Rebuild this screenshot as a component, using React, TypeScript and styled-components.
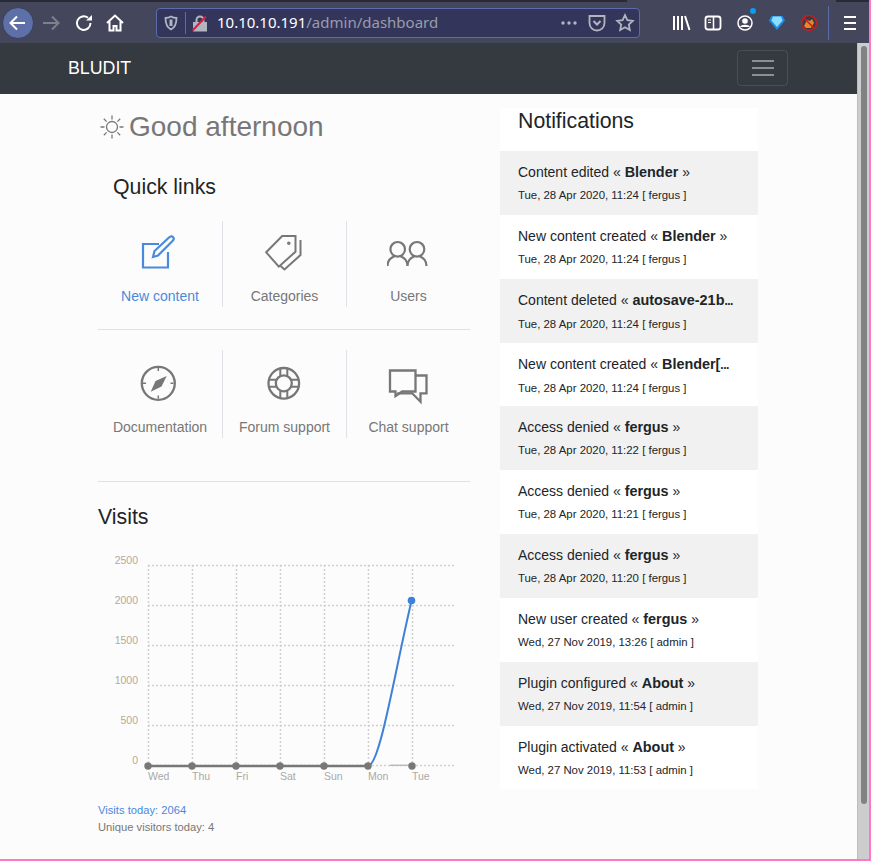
import { ReactNode } from "react"
import styled, { createGlobalStyle } from "styled-components";

const GlobalStyle = createGlobalStyle`
  html, body {
    margin: 0;
    padding: 0;
    background: #fcfcfc;
  }
  * {
    box-sizing: border-box;
  }
`;

const Frame = styled.div`
  width: 871px;
  height: 861px;
  overflow: hidden;
  display: flex;
  flex-direction: column;
  border-right: 2px solid #ff78c8;
  border-bottom: 2px solid #ff78c8;
  font-family: "Liberation Sans", Arial, sans-serif;
`;

const TabStrip = styled.div`
  height: 2px;
  flex: none;
  display: flex;
  background: #2a2a36;
`;

const TabGap = styled.div`
  width: 209px;
  margin-left: 627px;
  background: #44475c;
`;

const Toolbar = styled.div`
  height: 41px;
  flex: none;
  display: flex;
  align-items: center;
  padding-left: 2px;
  background: #44475c;
`;

const ToolButton = styled.div<{ $ml?: number }>`
  width: 32px;
  height: 32px;
  flex: none;
  position: relative;
  display: flex;
  align-items: center;
  justify-content: center;
  margin-left: ${p => p.$ml ?? 0}px;
`;

const BackButton = styled(ToolButton)`
  border-radius: 50%;
  background: #5d70a8;
  border: 1px solid #3a3f5c;
`;

const UrlBar = styled.div`
  width: 484px;
  height: 30px;
  margin-left: 25px;
  flex: none;
  display: flex;
  align-items: center;
  padding-left: 3px;
  border: 1px solid #5c6cab;
  border-radius: 4px;
  background: #33365a;
`;

const UrlDivider = styled.div`
  width: 1px;
  height: 22px;
  margin: 0 3px;
  background: #5c6cab;
`;

const UrlText = styled.div`
  font-family: "Noto Sans", sans-serif;
  font-size: 15px;
  line-height: 20px;
  padding-bottom: 2px;
  color: #9a9cab;
  margin-left: 6px;
  flex: 1;
  white-space: nowrap;
`;

const UrlHost = styled.span`
  color: #ffffff;
`;

const UrlActions = styled.div`
  display: flex;
  align-items: center;
  gap: 6px;
  padding-right: 3px;
`;

const UrlIcon = styled.div`
  width: 22px;
  height: 22px;
  display: flex;
  align-items: center;
  justify-content: center;
`;

const ToolbarDivider = styled.div`
  width: 1px;
  height: 34px;
  margin: 0 5px 0 3px;
  background: #5c6cab;
`;

const Badge = styled.span`
  position: absolute;
  top: 1px;
  right: 5px;
  width: 6px;
  height: 6px;
  border-radius: 50%;
  background: #0a9cf0;
`;

const Viewport = styled.div`
  flex: 1;
  min-height: 0;
  display: flex;
`;

const Page = styled.div`
  flex: 1;
  min-width: 0;
  background: #fcfcfc;
`;

const Scrollbar = styled.div`
  width: 12px;
  flex: none;
  padding: 3px 3px 0 3px;
  background: #cdcdcd;
  border-left: 1px solid #bdbdbd;
`;

const ScrollThumb = styled.div`
  height: 758px;
  width: 6px;
  border-radius: 3px;
  background: #7f8384;
`;

const Navbar = styled.div`
  height: 51px;
  display: flex;
  align-items: center;
  justify-content: space-between;
  padding: 0 69px 1px 68px;
  background: #343a40;
`;

const Brand = styled.div`
  font-size: 17.8px;
  color: #ffffff;
`;

const Toggler = styled.div`
  width: 51px;
  height: 36px;
  display: flex;
  flex-direction: column;
  align-items: center;
  justify-content: center;
  gap: 5px;
  border: 1px solid rgba(255, 255, 255, 0.1);
  border-radius: 4px;
`;

const TogglerBar = styled.div`
  width: 22px;
  height: 2px;
  background: #8b8f92;
`;

const Columns = styled.div`
  display: flex;
  align-items: flex-start;
  gap: 30px;
  padding: 14px 0 0 98px;
`;

const LeftColumn = styled.div`
  width: 372px;
  flex: none;
`;

const RightColumn = styled.div`
  width: 258px;
  flex: none;
  background: #ffffff;
`;

const Greeting = styled.div`
  height: 36px;
  display: flex;
  align-items: center;
  gap: 4px;
  padding: 2px 0 0 1px;
  font-size: 28px;
  color: #777777;
`;

const SectionTitle = styled.div<{ $pl?: number }>`
  font-size: 21.3px;
  line-height: 25px;
  padding-top: 1px;
  color: #212529;
  padding-left: ${p => p.$pl ?? 0}px;
`;

const QuickLinks = styled.div`
  margin-top: 30px;
`;

const LinkRow = styled.div<{ $height: number; $mt: number }>`
  display: grid;
  grid-template-columns: repeat(3, 1fr);
  height: ${p => p.$height}px;
  margin-top: ${p => p.$mt}px;
`;

const LinkCell = styled.div<{ $active?: boolean; $pt: number }>`
  display: flex;
  flex-direction: column;
  align-items: center;
  padding-top: ${p => p.$pt}px;
  font-size: 14px;
  white-space: nowrap;
  color: ${p => p.$active ? '#4a89dc' : '#777777'};
  & + & {
    border-left: 1px solid #dee2e6;
  }
`;

const LinkLabel = styled.div<{ $mt: number }>`
  margin-top: ${p => p.$mt}px;
  line-height: 18px;
`;

const Rule = styled.hr<{ $mt: number }>`
  margin: ${p => p.$mt}px 0 0;
  border: 0;
  border-top: 1px solid #dee2e6;
`;

const VisitsBlock = styled.div`
  margin-top: 22px;
`;

const Chart = styled.svg`
  display: block;
  margin-top: 20px;
  font-family: "Liberation Sans", Arial, sans-serif;
  font-size: 10.5px;
`;

const VisitLine = styled.div<{ $blue?: boolean }>`
  font-size: 11.2px;
  line-height: 17px;
  color: ${p => p.$blue ? '#4a89dc' : '#777777'};
`;

const NoticeHead = styled.div`
  height: 43px;
  padding-left: 18px;
`;

const NoticeRow = styled.div<{ $shaded: boolean }>`
  height: 63.85px;
  padding: 12px 0 0 18px;
  background: ${p => p.$shaded ? '#f1f1f1' : '#ffffff'};
  color: #212529;
`;

const NoticeTitle = styled.div`
  font-size: 14px;
  line-height: 19px;
  white-space: nowrap;
`;

const NoticeItem = styled.b`
  font-size: 14.4px;
`;

const TrimDots = styled.b`
  font-size: 12px;
  letter-spacing: -0.5px;
`;

const NoticeMeta = styled.div`
  margin-top: 5px;
  font-size: 11.4px;
  line-height: 17px;
  white-space: nowrap;
`;

type IconProps = { children: ReactNode, size?: number, color?: string, sw?: number, dx?: number };

function Icon({ children, size = 44, color = "#777", sw = 2.2, dx = 0 }: IconProps) {
  return (
    <svg width={size} height={size} viewBox={`${dx} 0 ${size} ${size}`} fill="none" stroke={color} strokeWidth={sw}>
      {children}
    </svg>
  )
}

const links = [
  [
    { label: "New content", active: true, icon: <Icon color="#4a89dc" dx={1}><path d="M22 13H6v23.500h25V21" /><path d="M16 26l1.500-6L32 6.500c1.500-1.500 3-1.500 4-.5s1 2.500-.5 4L21 24.500z" /></Icon> },
    { label: "Categories", icon: <Icon sw={2} dx={1.500}><path d="M4.700 21.300 20.700 5H34v15.700L17.300 35.700z" /><path d="M39 9v15L23 38.500l-4-3.500" /><circle cx="27.300" cy="12.300" r=".8" /></Icon> },
    { label: "Users", icon: <Icon sw={2.2} dx={2}><circle cx="12.700" cy="18.300" r="7.300" /><circle cx="32" cy="18.300" r="7.300" /><path d="M2.500 35c0-5.500 3.500-8.500 7-9.800M15.500 25.200c3.500 1.300 7 4.300 7 9.800 0-5.500 3.500-8.500 7-9.800M34.500 25.200c3.500 1.300 7 4.300 7 9.800" /></Icon> },
  ],
  [
    { label: "Documentation", icon: <Icon sw={2.300} dx={1}><circle cx="21.300" cy="22.300" r="16.500" /><path d="M21.300 7v3M21.300 34.500v3M6 22.300h3M33.500 22.300h3" strokeWidth={1.500} /><path d="M29.700 15 24.500 25.500 13.700 30.700 18.500 20z" fill="#777" stroke="none" /></Icon> },
    { label: "Forum support", icon: <Icon sw={2.300} dx={.5}><circle cx="21.300" cy="22.300" r="15.300" /><circle cx="21.300" cy="22.300" r="8" /><path d="M17.800 7.500v7.500M24.800 7.500v7.500M17.800 29.500V37M24.800 29.500V37M6.500 18.800h7.500M6.500 25.800h7.500M28.500 18.800H36M28.500 25.800H36" strokeWidth={2} /></Icon> },
    { label: "Chat support", icon: <Icon sw={2.300} dx={.5}><path d="M3.500 9.500h25.500v21H15.700L9 35v-4.500H3.500z" /><path d="M29 14.500h11v17.800h-6v8.400l-8.300-8.400H10.700" /></Icon> },
  ],
];

const notices = [
  { action: "Content edited", item: "Blender", date: "Tue, 28 Apr 2020, 11:24", user: "fergus" },
  { action: "New content created", item: "Blender", date: "Tue, 28 Apr 2020, 11:24", user: "fergus" },
  { action: "Content deleted", item: "autosave-21b", trimmed: true, date: "Tue, 28 Apr 2020, 11:24", user: "fergus" },
  { action: "New content created", item: "Blender[", trimmed: true, date: "Tue, 28 Apr 2020, 11:24", user: "fergus" },
  { action: "Access denied", item: "fergus", date: "Tue, 28 Apr 2020, 11:22", user: "fergus" },
  { action: "Access denied", item: "fergus", date: "Tue, 28 Apr 2020, 11:21", user: "fergus" },
  { action: "Access denied", item: "fergus", date: "Tue, 28 Apr 2020, 11:20", user: "fergus" },
  { action: "New user created", item: "fergus", date: "Wed, 27 Nov 2019, 13:26", user: "admin" },
  { action: "Plugin configured", item: "About", date: "Wed, 27 Nov 2019, 11:54", user: "admin" },
  { action: "Plugin activated", item: "About", date: "Wed, 27 Nov 2019, 11:53", user: "admin" },
];

function VisitsChart() {
  const days = ["Wed", "Thu", "Fri", "Sat", "Sun", "Mon", "Tue"];
  const values = ["2500", "2000", "1500", "1000", "500", "0"];
  const x = (i: number) => 50 + i * 44;
  const y = (i: number) => 15 + i * 40;
  return (
    <Chart width={372} height={252}>
      {values.map((v, i) => (
        <g key={v}>
          <line x1={50} x2={356} y1={y(i) + .5} y2={y(i) + .5} stroke="#d0d0d0" strokeWidth={1.500} strokeDasharray="2 2" />
          <text x={40} y={y(i) - 1} textAnchor="end" fill="#b5a99a">{v}</text>
        </g>
      ))}
      {days.map((d, i) => (
        <g key={d}>
          <line x1={x(i) + .5} x2={x(i) + .5} y1={15} y2={216} stroke="#d0d0d0" strokeWidth={1.500} strokeDasharray="2 2" />
          <text x={x(i)} y={230} fill="#a9a9a9">{d}</text>
        </g>
      ))}
      <path d="M292 215.300H314" stroke="#bbb" strokeWidth={1.500} />
      <path d="M270 216C282 216 297 120 313.500 51" fill="none" stroke="#3f80d8" strokeWidth={2} />
      <path d="M50 216H270" stroke="#777" strokeWidth={2.500} />
      {days.map((d, i) => <circle key={d} cx={x(i)} cy={216} r={3.700} fill="#777" />)}
      <circle cx={313.500} cy={50.500} r={3.800} fill="#3f80d8" />
    </Chart>
  )
}

export default function App() {
  return (
    <Frame>
      <GlobalStyle />
      <TabStrip><TabGap /></TabStrip>
      <Toolbar>
        <BackButton>
          <Icon size={22} color="#fff" sw={2}><path d="M18 11H4M10 4.500 3.500 11l6.500 6.500" /></Icon>
        </BackButton>
        <ToolButton $ml={1}>
          <Icon size={22} color="#7e808e" sw={2}><path d="M3 11h14.500M12 4.500l6.500 6.500-6.500 6.500" /></Icon>
        </ToolButton>
        <ToolButton $ml={1}>
          <Icon size={22} color="#fff" sw={2}><path d="M17.500 11A6.800 6.800 0 1 1 15 5.800" /><path d="M13 8.500h6V3z" fill="#fff" stroke="none" /></Icon>
        </ToolButton>
        <ToolButton $ml={-1}>
          <Icon size={22} color="#fff" sw={2}><path d="M3 11l8-7.500L19 11M5.500 9.500V18.500h4v-4.500h3v4.500h4V9.500" /></Icon>
        </ToolButton>
        <UrlBar>
          <UrlIcon>
            <Icon size={22} color="#b2b4c0" sw={1.800}><path d="M11 4.500c2 1.200 4 1.500 5.500 1.500 0 6-1.500 9.500-5.500 11.500C7 15.500 5.500 12 5.500 6 7 6 9 5.700 11 4.500z" /><path d="M11 7.500v6.500" strokeWidth={3} /></Icon>
          </UrlIcon>
          <UrlDivider />
          <UrlIcon>
            <Icon size={22} color="#b2b4c0" sw={2}><path d="M5 11h12v7.500H5z" fill="#b2b4c0" /><path d="M7.500 11V8a3.500 3.500 0 0 1 7 0v3" /><path d="M3.500 18.500 17 4.500" stroke="#e8173f" strokeWidth={2} /></Icon>
          </UrlIcon>
          <UrlText><UrlHost>10.10.10.191</UrlHost>/admin/dashboard</UrlText>
          <UrlActions>
            <UrlIcon>
              <svg width={22} height={22} viewBox="0 0 22 22" fill="#b2b4c0">
                <circle cx="5" cy="11" r="1.700" /><circle cx="11" cy="11" r="1.700" /><circle cx="17" cy="11" r="1.700" />
              </svg>
            </UrlIcon>
            <UrlIcon>
              <Icon size={22} color="#b2b4c0" sw={1.800}><path d="M3.500 4h15v7a7.500 7.500 0 0 1-15 0z" /><path d="M7.500 9 11 12.500 14.500 9" strokeWidth={2} /></Icon>
            </UrlIcon>
            <UrlIcon>
              <Icon size={22} color="#b2b4c0" sw={1.800}><path d="M11 3.200l2.400 5 5.400.7-4 3.700 1 5.400-4.800-2.700L6.200 18l1-5.400-4-3.700 5.400-.7z" /></Icon>
            </UrlIcon>
          </UrlActions>
        </UrlBar>
        <ToolButton $ml={25}>
          <Icon size={22} color="#fff" sw={2}><path d="M4 4v14M8 4v14M12 4v14M15 4l4.500 14" /></Icon>
        </ToolButton>
        <ToolButton>
          <Icon size={22} color="#fff" sw={1.800}><rect x="3.500" y="4.500" width="15" height="13" rx="2.500" /><path d="M11.500 4.500v13" strokeWidth={1.500} /><path d="M6 8h3M6 10.500h3" strokeWidth={1} /></Icon>
        </ToolButton>
        <ToolButton>
          <Icon size={22} color="#fff" sw={1.500}><circle cx="11" cy="11" r="7" /><circle cx="11" cy="9" r="2.800" fill="#fff" stroke="none" /><path d="M6 15c1-3 9-3 10 0z" fill="#fff" stroke="none" /></Icon>
          <Badge />
        </ToolButton>
        <ToolButton>
          <svg width={22} height={22} viewBox="0 0 22 22">
            <path d="M5.500 4h11L19 8.500 11 18 3 8.500z" fill="#1a8fe8" />
            <path d="M7 4.500h8L16.500 8.500 11 15 5.500 8.500z" fill="#8fdcff" />
          </svg>
        </ToolButton>
        <ToolButton>
          <svg width={22} height={22} viewBox="0 0 22 22">
            <circle cx="11" cy="11" r="7.500" fill="#3a3a48" stroke="#c81e1e" strokeWidth={1.500} />
            <path d="M6 14l3-6 3 1 2-2 2 4-3 5H8z" fill="#e8862a" />
            <path d="M6 6l10 10" stroke="#c81e1e" strokeWidth={1.500} />
          </svg>
        </ToolButton>
        <ToolbarDivider />
        <ToolButton>
          <Icon size={22} color="#fff" sw={2}><path d="M5 5h12M5 11h12M5 17h12" /></Icon>
        </ToolButton>
      </Toolbar>
      <Viewport>
        <Page>
          <Navbar>
            <Brand>BLUDIT</Brand>
            <Toggler>
              <TogglerBar />
              <TogglerBar />
              <TogglerBar />
            </Toggler>
          </Navbar>
          <Columns>
            <LeftColumn>
              <Greeting>
                <Icon size={26} sw={1.300}>
                  <circle cx="13" cy="13" r="5.500" />
                  <path d="M13 1.500v4M13 20.500v4M1.500 13h4M20.500 13h4M4.800 4.800l2.800 2.800M18.400 18.400l2.800 2.800M4.800 21.200l2.800-2.800M18.400 7.600l2.800-2.800" />
                </Icon>
                Good afternoon
              </Greeting>
              <QuickLinks>
                <SectionTitle $pl={15}>Quick links</SectionTitle>
                {links.map((row, i) => (
                  <div key={i}>
                    <LinkRow $height={i ? 88 : 86} $mt={i ? 20 : 21}>
                      {row.map(link => (
                        <LinkCell key={link.label} $active={link.active} $pt={i ? 11 : 10}>
                          {link.icon}
                          <LinkLabel $mt={i ? 13 : 12}>{link.label}</LinkLabel>
                        </LinkCell>
                      ))}
                    </LinkRow>
                    <Rule $mt={i ? 43 : 22} />
                  </div>
                ))}
              </QuickLinks>
              <VisitsBlock>
                <SectionTitle>Visits</SectionTitle>
                <VisitsChart />
                <VisitLine $blue>Visits today: 2064</VisitLine>
                <VisitLine>Unique visitors today: 4</VisitLine>
              </VisitsBlock>
            </LeftColumn>
            <RightColumn>
              <NoticeHead>
                <SectionTitle>Notifications</SectionTitle>
              </NoticeHead>
              {notices.map((n, i) => (
                <NoticeRow key={i} $shaded={i % 2 === 0}>
                  <NoticeTitle>
                    {n.action} « <NoticeItem>{n.item}</NoticeItem>
                    {n.trimmed ? <TrimDots>...</TrimDots> : " »"}
                  </NoticeTitle>
                  <NoticeMeta>{n.date} [ {n.user} ]</NoticeMeta>
                </NoticeRow>
              ))}
            </RightColumn>
          </Columns>
        </Page>
        <Scrollbar>
          <ScrollThumb />
        </Scrollbar>
      </Viewport>
    </Frame>
  )
}
